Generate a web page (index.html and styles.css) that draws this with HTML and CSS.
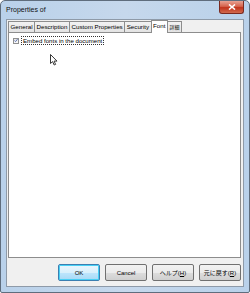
FILE: index.html
```html
<!DOCTYPE html>
<html>
<head>
<meta charset="utf-8">
<link rel="stylesheet" href="styles.css">
</head>
<body>
<div class="window">
  <div class="titlebar">
    <span class="title">Properties of</span>
    <span class="close"><svg width="8" height="6" viewBox="0 0 8 6"><path d="M1 0.5 L7 5.5 M7 0.5 L1 5.5" stroke="#fff" stroke-width="1.6"/></svg></span>
  </div>
  <div class="client">
    <div class="tabs">
      <span class="tab">General</span>
      <span class="tab">Description</span>
      <span class="tab">Custom Properties</span>
      <span class="tab">Security</span>
      <span class="tab active">Font</span>
      <span class="tab cjk">詳細</span>
    </div>
    <div class="panel">
      <div class="check-row">
        <span class="checkbox"><svg width="5" height="5" viewBox="0 0 5 5"><path d="M0.6 2.6 L1.9 3.9 L4.4 0.8" fill="none" stroke="#3a57a8" stroke-width="1"/></svg></span>
        <span class="label">Embed fonts in the document</span>
      </div>
      <svg class="cursor" width="9" height="12" viewBox="0 0 9 12"><path d="M0.5 0.5 L0.5 9.5 L2.6 7.6 L4.2 11 L5.6 10.4 L4.1 7.1 L7 7.1 Z" fill="#fff" stroke="#222" stroke-width="0.9"/></svg>
    </div>
    <div class="buttons">
      <span class="btn default">OK</span>
      <span class="btn">Cancel</span>
      <span class="btn">ヘルプ(<u>H</u>)</span>
      <span class="btn">元に戻す(<u>R</u>)</span>
    </div>
  </div>
</div>
</body>
</html>
```
FILE: styles.css
```css
html, body {
  margin: 0;
  padding: 0;
  width: 250px;
  height: 293px;
  overflow: hidden;
  background: #fff;
}
.window {
  box-sizing: border-box;
  width: 250px;
  height: 293px;
  background: linear-gradient(90deg, #b9d1ea 0%, #c6d8ec 50%, #b9d1ea 100%);
  border: 1px solid #5f6d7d;
  border-radius: 5px 5px 2px 2px;
  display: flex;
  flex-direction: column;
  padding: 0 5px 5px 5px;
  font-family: "Liberation Sans", "Noto Sans CJK JP", sans-serif;
  font-size: 6px;
  color: #000;
}
.titlebar {
  height: 18px;
  display: flex;
  align-items: flex-start;
  justify-content: space-between;
}
.title {
  margin-top: 5px;
  font-size: 7px;
  color: #111;
}
.close {
  width: 25px;
  height: 13px;
  box-sizing: border-box;
  border: 1px solid #7a2a20;
  border-top: none;
  border-radius: 0 0 3px 3px;
  background: linear-gradient(#e8a293 0%, #d5634c 45%, #c1341c 55%, #d06a4e 100%);
  display: flex;
  align-items: center;
  justify-content: center;
}
.client {
  flex: 1;
  background: #f0f0f0;
  border: 1px solid #8e9aa8;
  display: flex;
  flex-direction: column;
  padding: 1px 2px 0 1px;
}
.tabs {
  display: flex;
  align-items: flex-end;
  height: 11px;
  position: relative;
  z-index: 1;
}
.tab {
  height: 10px;
  line-height: 10px;
  padding: 0 1.5px;
  border: 1px solid #8d8d8d;
  border-bottom: none;
  margin-right: -1px;
  background: linear-gradient(#f2f2f2, #e3e3e3);
  font-size: 6.2px;
  white-space: nowrap;
}
.tab.cjk {
  font-size: 5px;
}
.tab.active {
  height: 12px;
  background: #fff;
  margin-bottom: -1px;
  position: relative;
  z-index: 2;
}
.panel {
  height: 224px;
  background: #fff;
  border: 1px solid #8d8d8d;
  position: relative;
}
.check-row {
  display: flex;
  align-items: center;
  margin: 3px 0 0 4px;
}
.checkbox {
  width: 6px;
  height: 6px;
  box-sizing: border-box;
  border: 1px solid #8f8f8f;
  background: linear-gradient(#e6e6e6, #fafafa);
  display: flex;
  align-items: center;
  justify-content: center;
  margin-right: 2px;
}
.label {
  border: 1px dotted #333;
  padding: 0 1px;
  line-height: 7px;
  font-size: 6.1px;
}
.cursor {
  position: absolute;
  left: 41px;
  top: 21px;
}
.buttons {
  display: flex;
  justify-content: flex-end;
  gap: 5px;
  padding: 6px 0 0 0;
}
.btn {
  box-sizing: border-box;
  width: 42px;
  height: 17px;
  border: 1px solid #707070;
  border-radius: 2px;
  background: linear-gradient(#f2f2f2 0%, #ebebeb 50%, #dddddd 51%, #cfcfcf 100%);
  display: flex;
  align-items: center;
  justify-content: center;
  font-size: 6px;
  white-space: nowrap;
}
.btn.default {
  border-color: #3c7fb1;
  box-shadow: inset 0 0 0 1px #48d0f5;
  background: linear-gradient(#eaf6fd 0%, #d9f0fc 50%, #bee6fd 51%, #a7d9f5 100%);
}
```
